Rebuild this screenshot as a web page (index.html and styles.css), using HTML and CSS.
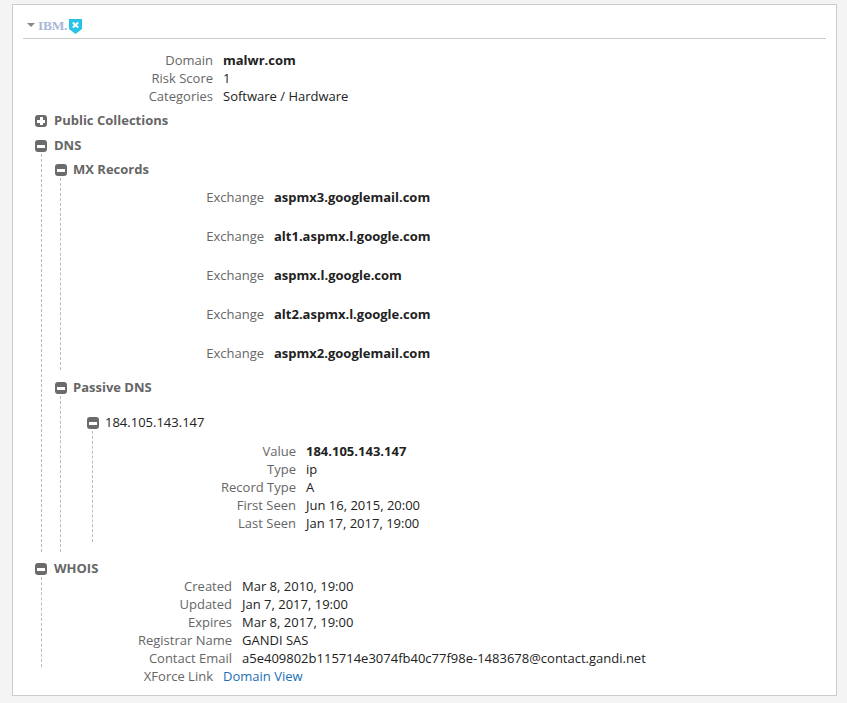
FILE: index.html
```html
<!DOCTYPE html>
<html lang="en">
<head>
<meta charset="utf-8">
<title>IBM X-Force</title>
<link rel="stylesheet" href="styles.css">
</head>
<body>
<main class="panel">
  <header class="panel-head">
    <span class="caret"></span>
    <span class="ibm">IBM.</span>
    <svg class="shield" width="13" height="15" viewBox="0 0 13 15"><path d="M0 0H13V10L6.500 15L0 10Z" fill="#27c3e6"/><path d="M3.800 3.500L9.200 8.500M9.200 3.500L3.800 8.500" stroke="#fff" stroke-width="2" fill="none"/></svg>
  </header>
  <dl class="kv kv-top">
    <div><dt>Domain</dt><dd class="b">malwr.com</dd></div>
    <div><dt>Risk Score</dt><dd>1</dd></div>
    <div><dt>Categories</dt><dd>Software / Hardware</dd></div>
  </dl>
  <div class="node collections">
    <div class="title"><span class="tog plus"></span>Public Collections</div>
  </div>
  <section class="node dns">
    <div class="title"><span class="tog"></span>DNS</div>
    <div class="body">
      <section class="node mx">
        <div class="title sub"><span class="tog"></span>MX Records</div>
        <div class="body mx-body">
          <dl class="kv kv-mx"><div><dt>Exchange</dt><dd class="b">aspmx3.googlemail.com</dd></div></dl>
          <dl class="kv kv-mx"><div><dt>Exchange</dt><dd class="b">alt1.aspmx.l.google.com</dd></div></dl>
          <dl class="kv kv-mx"><div><dt>Exchange</dt><dd class="b">aspmx.l.google.com</dd></div></dl>
          <dl class="kv kv-mx"><div><dt>Exchange</dt><dd class="b">alt2.aspmx.l.google.com</dd></div></dl>
          <dl class="kv kv-mx"><div><dt>Exchange</dt><dd class="b">aspmx2.googlemail.com</dd></div></dl>
        </div>
      </section>
      <section class="node passive">
        <div class="title sub"><span class="tog"></span>Passive DNS</div>
        <div class="body">
          <section class="node ip">
            <div class="title plain sub"><span class="tog"></span>184.105.143.147</div>
            <div class="body ip-body">
              <dl class="kv kv-ip">
                <div><dt>Value</dt><dd class="b">184.105.143.147</dd></div>
                <div><dt>Type</dt><dd>ip</dd></div>
                <div><dt>Record Type</dt><dd>A</dd></div>
                <div><dt>First Seen</dt><dd>Jun 16, 2015, 20:00</dd></div>
                <div><dt>Last Seen</dt><dd>Jan 17, 2017, 19:00</dd></div>
              </dl>
            </div>
          </section>
        </div>
      </section>
    </div>
  </section>
  <section class="node whois">
    <div class="title"><span class="tog"></span>WHOIS</div>
    <div class="body whois-body">
      <dl class="kv kv-whois">
        <div><dt>Created</dt><dd>Mar 8, 2010, 19:00</dd></div>
        <div><dt>Updated</dt><dd>Jan 7, 2017, 19:00</dd></div>
        <div><dt>Expires</dt><dd>Mar 8, 2017, 19:00</dd></div>
        <div><dt>Registrar Name</dt><dd>GANDI SAS</dd></div>
        <div><dt>Contact Email</dt><dd>a5e409802b115714e3074fb40c77f98e-1483678@contact.gandi.net</dd></div>
      </dl>
    </div>
    <dl class="kv kv-link"><div><dt>XForce Link</dt><dd><a href="#">Domain View</a></dd></div></dl>
  </section>
</main>
</body>
</html>
```
FILE: styles.css
```css
html, body { margin: 0; padding: 0; }
body {
  background: #f4f4f4;
  font-family: "Open Sans", sans-serif;
  font-size: 13px;
  line-height: 18px;
  color: #222;
  height: 703px;
  overflow: hidden;
}
.panel {
  box-sizing: border-box;
  width: 825px;
  height: 692px;
  margin: 4px 0 0 12px;
  padding: 0 10px 0 9px;
  background: #fff;
  border: 1px solid #ccc;
}
.panel-head {
  display: flex;
  align-items: center;
  height: 34px;
  box-sizing: border-box;
  border-bottom: 1px solid #ccc;
  margin-left: 1px;
  padding: 6px 0 0 4px;
}
.caret {
  width: 0; height: 0;
  border-left: 4px solid transparent;
  border-right: 4px solid transparent;
  border-top: 4px solid #888;
  margin-right: 3px;
}
.ibm {
  font-family: "Liberation Serif", serif;
  font-weight: 700;
  font-size: 13.500px;
  letter-spacing: -0.3px;
  color: #a9b8d6;
  margin-right: 2px;
  margin-top: 3px;
}
.shield { display: block; margin-top: 3px; }
.kv { margin: 0; }
.kv > div { display: flex; }
.kv dt { color: #666; text-align: right; flex: none; }
.kv dd { margin: 0 0 0 10px; white-space: nowrap; }
.b { font-weight: 700; }
.kv-top { padding-top: 12px; }
.kv-top dt { width: 191px; }
.title {
  display: flex;
  align-items: center;
  font-weight: 700;
  color: #666;
}
.title.plain { font-weight: 400; color: #222; }
.tog {
  position: relative;
  flex: none;
  width: 12px;
  height: 12px;
  background: #6b6b6b;
  border-radius: 3px;
  margin: 2px 7px 0 0;
}
.sub .tog { margin-right: 6px; }
.tog::before {
  content: "";
  position: absolute;
  left: 2px; right: 2px; top: 4.500px;
  height: 3px;
  background: #fff;
}
.tog.plus::after {
  content: "";
  position: absolute;
  left: 4.500px; top: 2px; bottom: 2px;
  width: 3px;
  background: #fff;
}
.node > .body { border-left: 1px dashed #bbb; }
.collections { margin: 6px 0 0 13px; }
.dns { margin: 7px 0 0 13px; }
.dns > .body { margin-left: 6px; padding: 6px 0 0 13px; }
.mx-body { margin-left: 5px; padding: 10px 0 8px 0; }
.kv-mx { margin-bottom: 21px; }
.kv-mx:last-child { margin-bottom: 0; }
.kv-mx dt { width: 203px; }
.passive { margin-top: 8px; }
.passive > .body { margin-left: 5px; padding: 17px 0 10px 26px; }
.kv-ip dt { width: 203px; }
.ip-body { margin-left: 5px; padding: 11px 0 10px 0; }
.whois { margin: 7px 0 0 13px; }
.whois-body { margin-left: 6px; height: 90px; }
.kv-whois dt { width: 190px; }
.kv-link dt { width: 178px; }
a { color: #1a6fb5; text-decoration: none; }
```
